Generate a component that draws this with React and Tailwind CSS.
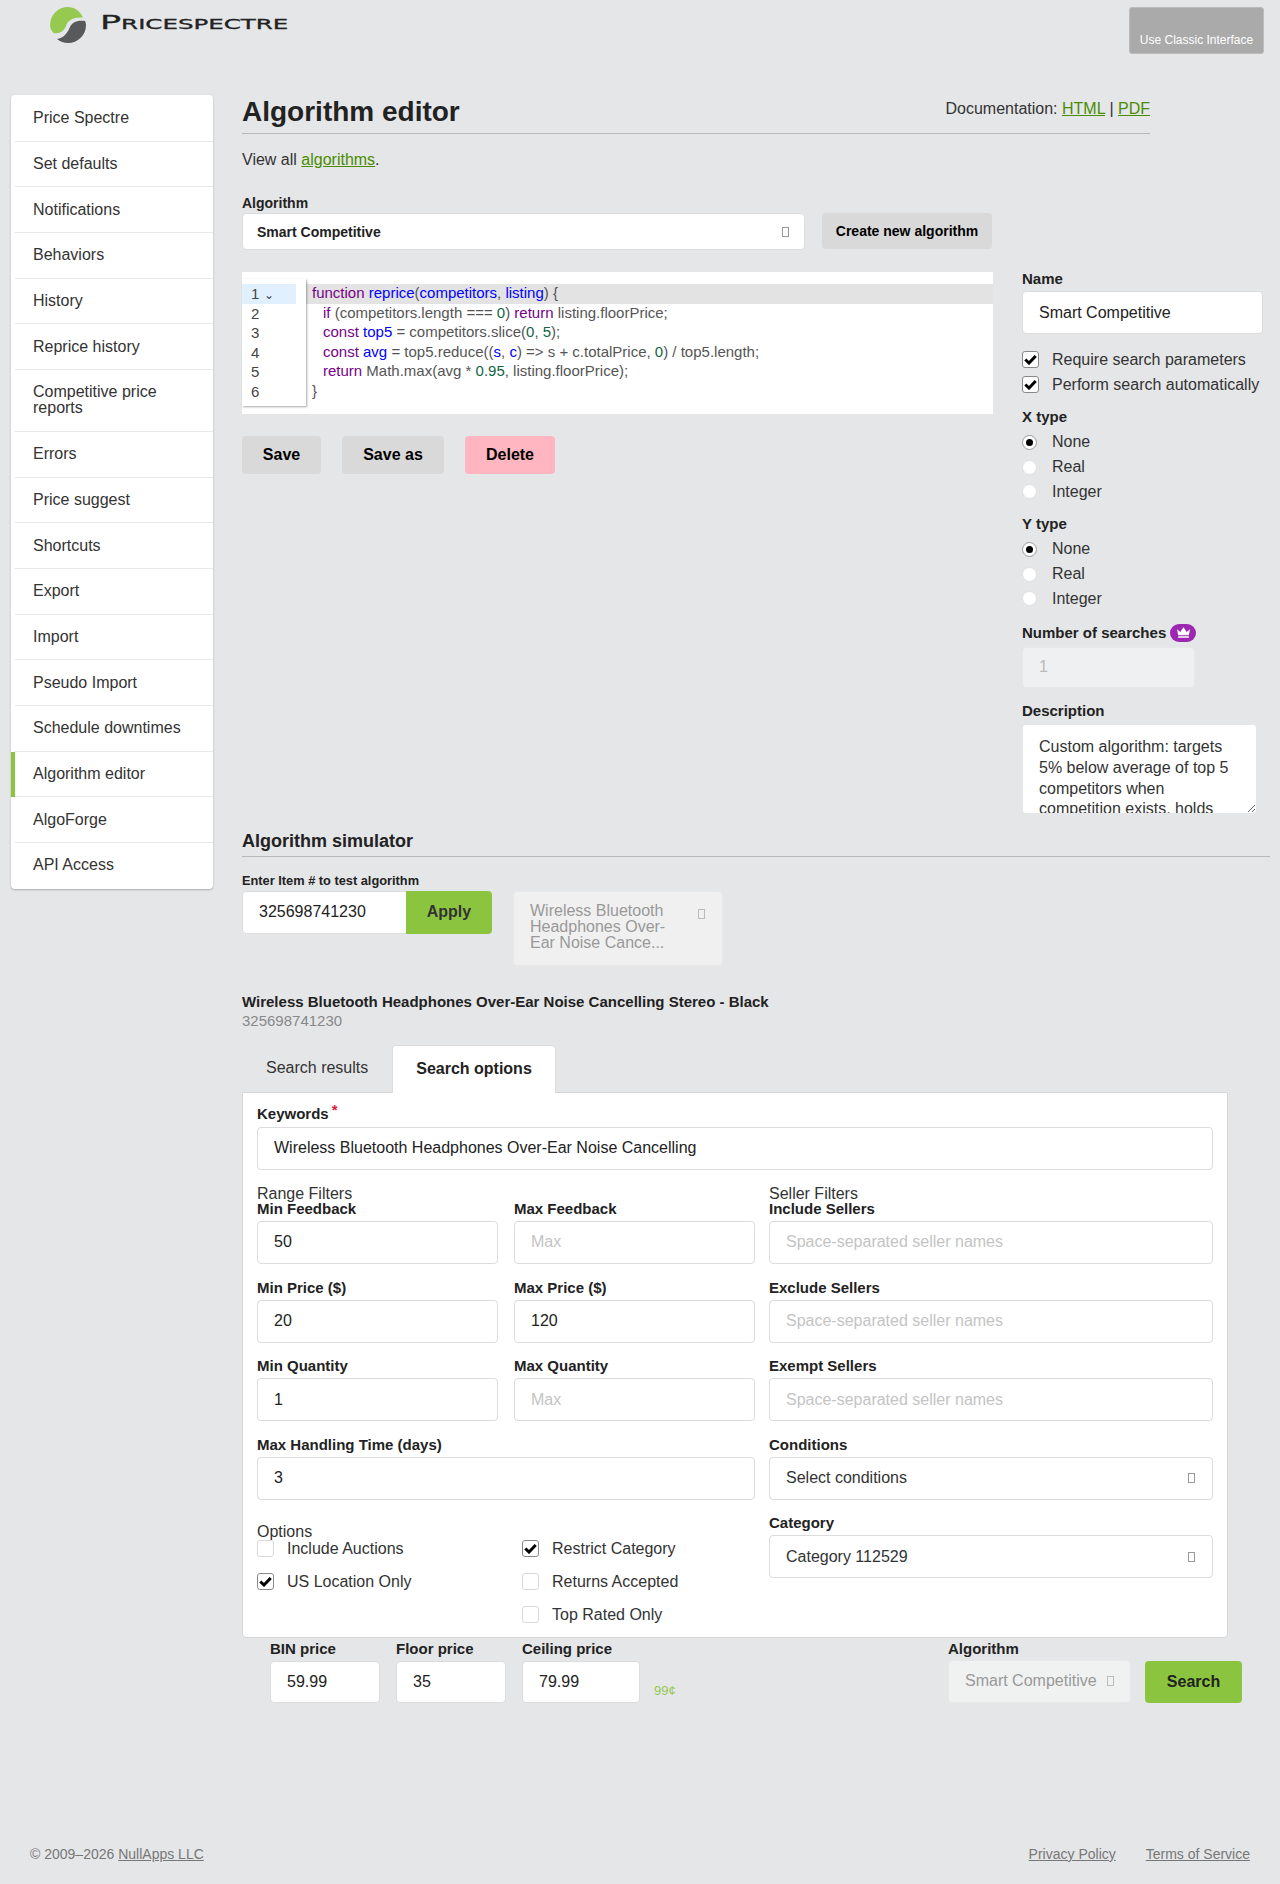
import React from "react";

const nav = ["Price Spectre","Set defaults","Notifications","Behaviors","History","Reprice history","Competitive price reports","Errors","Price suggest","Shortcuts","Export","Import","Pseudo Import","Schedule downtimes","Algorithm editor","AlgoForge","API Access"];

const inputCls = "block bg-white border border-[#dcdcdc] rounded-[4px] px-4 text-[16px] text-[#222] outline-none placeholder:text-[#c4c4c4]";

function Tofu({ cls = "border-[#999]" }) {
  return <span className={"inline-block w-[7px] h-[10px] border shrink-0 " + cls} />;
}

function Check({ on }) {
  return (
    <span className={"w-[17px] h-[17px] rounded-[3px] border bg-white flex items-center justify-center shrink-0 " + (on ? "border-[#888]" : "border-[#d8d8d8]")}>
      {on && (
        <svg width="13" height="11" viewBox="0 0 13 11"><path d="M1.3 5.5 L5 9 L11.7 2" fill="none" stroke="#000" strokeWidth="3" /></svg>
      )}
    </span>
  );
}

function CheckRow({ on, label, cls = "" }) {
  return (
    <div className={"flex items-center gap-[13px] text-[16px] text-[#333] leading-[17px] " + cls}>
      <Check on={on} />
      <span>{label}</span>
    </div>
  );
}

function Radio({ on, label }) {
  return (
    <div className="flex items-center h-[24.8px] text-[16px] text-[#333]">
      <span className={"w-[15px] h-[15px] rounded-full bg-white border flex items-center justify-center " + (on ? "border-[#999]" : "border-[#e0e0e0]")}>
        {on && <span className="w-[7px] h-[7px] rounded-full bg-black" />}
      </span>
      <span className="ml-[15px]">{label}</span>
    </div>
  );
}

function Field({ label, value, placeholder, w = "w-[241px]" }) {
  return (
    <div>
      <div className="h-[16px] leading-[16px] mb-[4px] text-[15px] font-bold text-[#222]">{label}</div>
      <input readOnly className={inputCls + " h-[43px] " + w} defaultValue={value} placeholder={placeholder} />
    </div>
  );
}

function Sel({ label, value }) {
  return (
    <div>
      <div className="h-[16px] leading-[16px] mb-[4px] text-[15px] font-bold text-[#222]">{label}</div>
      <div className="h-[43px] bg-white border border-[#dcdcdc] rounded-[4px] pl-4 pr-[17px] flex items-center justify-between text-[16px] text-[#333]">
        <span>{value}</span>
        <Tofu />
      </div>
    </div>
  );
}

const K = ({ children }) => <span className="text-[#708]">{children}</span>;
const D = ({ children }) => <span className="text-[#00f]">{children}</span>;
const N = ({ children }) => <span className="text-[#164]">{children}</span>;
const In = ({ children }) => <div className="pl-[11px]">{children}</div>;

const code = [
  <div><K>function</K> <D>reprice</D>(<D>competitors</D>, <D>listing</D>) {"{"}</div>,
  <In><K>if</K> (competitors.length === <N>0</N>) <K>return</K> listing.floorPrice;</In>,
  <In><K>const</K> <D>top5</D> = competitors.slice(<N>0</N>, <N>5</N>);</In>,
  <In><K>const</K> <D>avg</D> = top5.reduce((<D>s</D>, <D>c</D>) =&gt; s + c.totalPrice, <N>0</N>) / top5.length;</In>,
  <In><K>return</K> Math.max(avg * <N>0.95</N>, listing.floorPrice);</In>,
  <div>{"}"}</div>,
];

function Logo() {
  return (
    <svg width="36" height="36" viewBox="0 0 36 36" className="block">
      <path d="M18 0 A18 18 0 0 0 0 18 C0 21 1.5 24 3.5 26 C10 27 14 24 16 19 C18 13 23 10 33 10.5 C30 4 24 0 18 0 Z" fill="#95c950" />
      <path d="M35 14 C27 13 22 15 19.5 21 C17 27 13 31 7 32 C10 34.5 14 36 18 36 A18 18 0 0 0 36 18 C36 16.5 35.5 15 35 14 Z" fill="#58595b" />
    </svg>
  );
}

export default function App() {
  return (
    <div className="min-h-[1884px] flex flex-col bg-[#e5e6e8] text-[#222] font-['Liberation_Sans',Arial,sans-serif]">
      <header className="h-[95px] flex justify-between items-start shrink-0">
        <div className="flex items-center ml-[50px] mt-[7px]">
          <Logo />
          <span className="ml-[14px] -mt-[7px] origin-left scale-x-[1.75] text-[20px] leading-[24px] text-[#222] [font-variant:small-caps] font-['DejaVu_Sans',sans-serif] [-webkit-text-stroke:0.3px_#222]">Pricespectre</span>
        </div>
        <div className="mt-[7px] mr-[16px] w-[135px] h-[47px] bg-[#aaaaaa] border border-[#bcbcbc] rounded-[3px] flex items-end justify-center pb-[6px] text-[12px] leading-[14px] text-white">Use Classic Interface</div>
      </header>

      <div className="flex items-start">
        <nav className="ml-[11px] w-[202px] shrink-0 bg-white rounded-[4px] pt-[1px] pb-[1px] shadow-[0_1px_2px_rgba(0,0,0,0.25)]">
          {nav.map((n, i) => (
            <div key={n} className={"border-l-4 " + (n === "Algorithm editor" ? "border-[#8bc53f]" : "border-transparent")}>
              <div className={"pl-[18px] pr-4 py-[14.35px] text-[16px] leading-[16px] text-[#333] " + (i < nav.length - 1 ? "border-b border-[#e8e8e8]" : "")}>{n}</div>
            </div>
          ))}
        </nav>

        <main className="ml-[29px] w-[1028px]">
          <div className="w-[908px] h-[39px] border-b border-[#b9b9b9] flex justify-between items-start">
            <h1 className="mt-[1px] text-[28px] leading-[32px] font-bold text-[#222]">Algorithm editor</h1>
            <div className="text-[16px] leading-[18px] mt-[5px] text-[#333]">
              Documentation: <a className="text-[#4a8c00] underline">HTML</a> | <a className="text-[#4a8c00] underline">PDF</a>
            </div>
          </div>

          <div className="flex items-start">
            <div className="w-[751px] shrink-0">
              <div className="mt-[16px] text-[16px] leading-[20px] text-[#333]">View all <a className="text-[#4a8c00] underline">algorithms</a>.</div>
              <div className="mt-[25px] text-[14px] leading-[16px] font-bold text-[#222]">Algorithm</div>
              <div className="mt-[2px] flex items-start">
                <div className="w-[563px] h-[37px] bg-white border border-[#dcdcdc] rounded-[4px] pl-[14px] pr-[15px] pt-[1px] flex items-center justify-between text-[14px] font-bold text-[#222]">
                  <span>Smart Competitive</span>
                  <Tofu />
                </div>
                <button className="ml-[17px] w-[170px] h-[36px] bg-[#d9d9d9] rounded-[4px] text-[14px] font-bold text-black">Create new algorithm</button>
              </div>

              <div className="mt-[22px] h-[142px] bg-white pt-[12px] relative">
                <div className="bg-[#e3e3e3] h-[20px] absolute left-0 right-0 top-[12px]" />
                <div className="absolute left-0 top-[7px] w-[64px] h-[127px] bg-white shadow-[1px_1px_2px_rgba(0,0,0,0.35)] pt-[5px] pr-[10px] text-[15px] leading-[19.6px] text-[#444]">
                  {[1, 2, 3, 4, 5, 6].map((n) => (
                    <div key={n} className={"pl-[9px] h-[19.6px] " + (n === 1 ? "bg-[#e0f0ff]" : "")}>
                      {n}{n === 1 && <span className="ml-[5px] text-[12px]">⌄</span>}
                    </div>
                  ))}
                </div>
                <div className="relative ml-[70px] -mt-[1px] text-[15px] leading-[19.6px] text-[#555] whitespace-pre">
                  {code.map((c, i) => <React.Fragment key={i}>{c}</React.Fragment>)}
                </div>
              </div>

              <div className="mt-[22px] flex text-[16px] font-bold text-black">
                <button className="w-[79px] h-[38px] bg-[#d9d9d9] rounded-[4px]">Save</button>
                <button className="ml-[21px] w-[102px] h-[38px] bg-[#d9d9d9] rounded-[4px]">Save as</button>
                <button className="ml-[21px] w-[90px] h-[38px] bg-[#ffb6c1] rounded-[4px]">Delete</button>
              </div>
            </div>

            <div className="ml-[29px] w-[245px] pt-[137px]">
              <div className="text-[15px] leading-[16px] font-bold">Name</div>
              <input readOnly defaultValue="Smart Competitive" className={inputCls + " mt-[4px] w-[241px] h-[43px]"} />
              <CheckRow on label="Require search parameters" cls="mt-[17px] whitespace-nowrap" />
              <CheckRow on label="Perform search automatically" cls="mt-[8px] whitespace-nowrap" />
              <div className="mt-[16px] text-[15px] leading-[16px] font-bold">X type</div>
              <div className="mt-[5px]">
                <Radio on label="None" /><Radio label="Real" /><Radio label="Integer" />
              </div>
              <div className="mt-[11.6px] text-[15px] leading-[16px] font-bold">Y type</div>
              <div className="mt-[5px]">
                <Radio on label="None" /><Radio label="Real" /><Radio label="Integer" />
              </div>
              <div className="mt-[12.6px] h-[18px] flex items-center text-[15px] font-bold">
                Number of searches
                <span className="ml-[4px] w-[26px] h-[18px] rounded-full bg-[#9c27b0] flex items-center justify-center">
                  <svg width="15" height="13" viewBox="0 0 14 12"><path d="M1 3 L4 5.5 L7 1 L10 5.5 L13 3 L12 8.5 H2 Z M2 9.5 H12 V11 H2 Z" fill="#fff" /></svg>
                </span>
              </div>
              <input readOnly defaultValue="1" className="block mt-[5px] w-[173px] h-[41px] bg-[#eff0f1] border border-[#e8e8e8] rounded-[4px] px-4 text-[16px] text-[#bbb] outline-none" />
              <div className="mt-[15px] text-[15px] leading-[16px] font-bold">Description</div>
              <textarea readOnly className="block mt-[5px] w-[235px] h-[90px] bg-white border border-[#e5e6e8] rounded-[4px] px-4 pt-[12px] text-[16px] leading-[20.8px] text-[#333] outline-none" defaultValue="Custom algorithm: targets 5% below average of top 5 competitors when competition exists, holds floor price otherwise." />
            </div>
          </div>

          <div className="mt-[13px] h-[30px] border-b border-[#b9b9b9] text-[18px] leading-[28px] font-bold text-[#222]">Algorithm simulator</div>

          <div className="mt-[16px] text-[12.8px] leading-[15px] font-bold text-[#222]">Enter Item # to test algorithm</div>
          <div className="mt-[3px] flex items-start">
            <input readOnly defaultValue="325698741230" className="block w-[165px] h-[43px] bg-white border border-[#dcdcdc] rounded-l-[4px] px-4 text-[16px] text-[#222] outline-none" />
            <button className="w-[86px] h-[43px] -ml-[1px] bg-[#8bc53f] rounded-r-[4px] text-[16px] font-bold text-[#333]">Apply</button>
            <div className="ml-[21px] w-[210px] h-[75px] bg-[#f0f0f0] border border-[#e8e8e8] rounded-[4px] pl-4 pr-[17px] pt-[11px] flex justify-between items-start text-[16px] leading-[16px] text-[#999]">
              <span className="w-[140px]">Wireless Bluetooth Headphones Over-Ear Noise Cance...</span>
              <span className="mt-[3px]"><Tofu cls="border-[#bbb]" /></span>
            </div>
          </div>

          <div className="mt-[27px] text-[15px] leading-[17px] font-bold text-[#222]">Wireless Bluetooth Headphones Over-Ear Noise Cancelling Stereo - Black</div>
          <div className="mt-[2px] text-[15px] leading-[17px] text-[#888]">325698741230</div>

          <div className="mt-[15px] flex items-end h-[48px] text-[16px]">
            <div className="w-[150px] h-[47px] flex items-center pl-[24px] text-[#333]">Search results</div>
            <div className="w-[164px] h-[48px] bg-white border border-[#dcdcdc] border-b-0 rounded-t-[4px] flex items-center justify-center font-bold text-[#222] relative z-10 -mb-[1px]">Search options</div>
          </div>

          <div className="w-[986px] h-[546px] bg-white border border-[#d6d6d6] rounded-b-[4px] px-[14px] pt-[12px]">
            <div className="h-[17px] leading-[17px] text-[15px] font-bold text-[#222]">Keywords<span className="relative -top-[4px] ml-[3px] text-[#e0193c]">*</span></div>
            <input readOnly defaultValue="Wireless Bluetooth Headphones Over-Ear Noise Cancelling" className={inputCls + " mt-[5px] w-[956px] h-[43px]"} />

            <div className="mt-[16px] h-[15px] grid grid-cols-[257px_255px_444px] text-[16px] leading-[16px] text-[#333]">
              <div className="col-span-2">Range Filters</div>
              <div>Seller Filters</div>
            </div>

            <div className="grid grid-cols-[257px_255px_444px] gap-y-[15.6px]">
              <Field label="Min Feedback" value="50" />
              <Field label="Max Feedback" placeholder="Max" />
              <Field label="Include Sellers" placeholder="Space-separated seller names" w="w-[444px]" />
              <Field label="Min Price ($)" value="20" />
              <Field label="Max Price ($)" value="120" />
              <Field label="Exclude Sellers" placeholder="Space-separated seller names" w="w-[444px]" />
              <Field label="Min Quantity" value="1" />
              <Field label="Max Quantity" placeholder="Max" />
              <Field label="Exempt Sellers" placeholder="Space-separated seller names" w="w-[444px]" />
              <div className="col-span-2"><Field label="Max Handling Time (days)" value="3" w="w-[498px]" /></div>
              <Sel label="Conditions" value="Select conditions" />
              <div className="col-span-2">
                <div className="mt-[9px] h-[16px] leading-[16px] text-[16px] text-[#333]">Options</div>
                <div className="grid grid-cols-[265px_1fr] gap-y-[16px]">
                  <CheckRow label="Include Auctions" />
                  <CheckRow on label="Restrict Category" />
                  <CheckRow on label="US Location Only" />
                  <CheckRow label="Returns Accepted" />
                  <div />
                  <CheckRow label="Top Rated Only" />
                </div>
              </div>
              <Sel label="Category" value="Category 112529" />
            </div>
          </div>

          <div className="w-[1000px] pl-[28px] mt-[3px] flex justify-between items-start">
            <div className="flex items-start">
              <div><div className="h-[16px] leading-[16px] mb-[4px] text-[15px] font-bold">BIN price</div><input readOnly defaultValue="59.99" className={inputCls + " w-[110px] h-[42px]"} /></div>
              <div className="ml-[16px]"><div className="h-[16px] leading-[16px] mb-[4px] text-[15px] font-bold">Floor price</div><input readOnly defaultValue="35" className={inputCls + " w-[110px] h-[42px]"} /></div>
              <div className="ml-[16px]"><div className="h-[16px] leading-[16px] mb-[4px] text-[15px] font-bold">Ceiling price</div><input readOnly defaultValue="79.99" className={inputCls + " w-[118px] h-[42px]"} /></div>
              <div className="ml-[14px] mt-[43px] text-[13px] leading-[14px] text-[#95c950]">99¢</div>
            </div>
            <div className="flex items-start">
              <div>
                <div className="h-[16px] leading-[16px] mb-[3px] text-[15px] font-bold">Algorithm</div>
                <div className="w-[183px] h-[43px] bg-[#f0f2f2] border border-[#e8e8e8] rounded-[4px] pl-4 pr-[16px] flex items-center justify-between text-[16px] text-[#999]">
                  <span className="whitespace-nowrap">Smart Competitive</span>
                  <Tofu cls="border-[#bbb]" />
                </div>
              </div>
              <button className="ml-[14px] mt-[20px] w-[97px] h-[42px] bg-[#8bc53f] rounded-[4px] text-[16px] font-bold text-[#222]">Search</button>
            </div>
          </div>
        </main>
      </div>

      <footer className="mt-auto flex justify-between px-[30px] pb-[22px] text-[14px] leading-[16px] text-[#777]">
        <div>© 2009–2026 <a className="underline">NullApps LLC</a></div>
        <div className="flex gap-[30px]"><a className="underline">Privacy Policy</a><a className="underline">Terms of Service</a></div>
      </footer>
    </div>
  );
}
